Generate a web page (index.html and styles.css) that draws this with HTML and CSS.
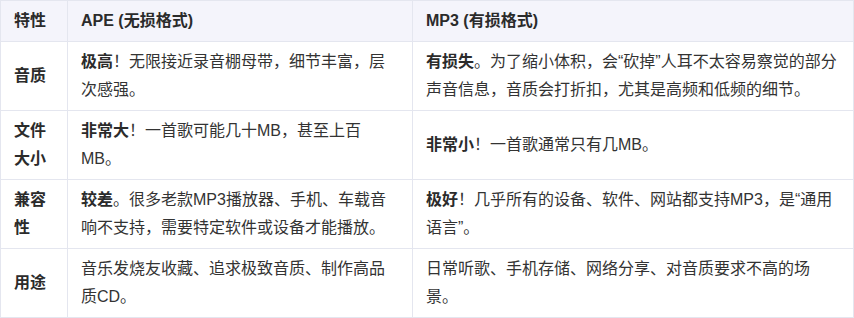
FILE: index.html
```html
<!DOCTYPE html>
<html lang="zh-CN">
<head>
<meta charset="utf-8">
<link rel="stylesheet" href="styles.css">
</head>
<body>
<table class="cmp">
  <colgroup>
    <col class="c1">
    <col class="c2">
    <col class="c3">
  </colgroup>
  <thead>
    <tr>
      <th>特性</th>
      <th>APE (无损格式)</th>
      <th>MP3 (有损格式)</th>
    </tr>
  </thead>
  <tbody>
    <tr>
      <th>音质</th>
      <td><strong>极高</strong>！无限接近录音棚母带，细节丰富，层次感强。</td>
      <td><strong>有损失</strong>。为了缩小体积，会“砍掉”人耳不太容易察觉的部分声音信息，音质会打折扣，尤其是高频和低频的细节。</td>
    </tr>
    <tr>
      <th>文件大小</th>
      <td><strong>非常大</strong>！一首歌可能几十MB，甚至上百MB。</td>
      <td><strong>非常小</strong>！一首歌通常只有几MB。</td>
    </tr>
    <tr>
      <th>兼容性</th>
      <td><strong>较差</strong>。很多老款MP3播放器、手机、车载音响不支持，需要特定软件或设备才能播放。</td>
      <td><strong>极好</strong>！几乎所有的设备、软件、网站都支持MP3，是“通用语言”。</td>
    </tr>
    <tr>
      <th>用途</th>
      <td>音乐发烧友收藏、追求极致音质、制作高品质CD。</td>
      <td>日常听歌、手机存储、网络分享、对音质要求不高的场景。</td>
    </tr>
  </tbody>
</table>
</body>
</html>
```
FILE: styles.css
```css
html, body {
  margin: 0;
  padding: 0;
  background: #ffffff;
}
body {
  font-family: "Liberation Sans", "Noto Sans CJK SC", sans-serif;
  font-size: 16px;
  color: #333333;
}
.cmp {
  width: 854px;
  border-collapse: collapse;
  table-layout: fixed;
}
.c1 { width: 67px; }
.c2 { width: 345px; }
.c3 { width: auto; }
.cmp th,
.cmp td {
  border: 1px solid #e4e6ef;
  padding: 6px 13px;
  line-height: 28px;
  text-align: left;
  vertical-align: middle;
}
.cmp th {
  font-weight: bold;
  color: #2b2b2b;
}
.cmp thead th {
  background: #f4f4fb;
}
.cmp strong {
  font-weight: bold;
  color: #2b2b2b;
}
```
